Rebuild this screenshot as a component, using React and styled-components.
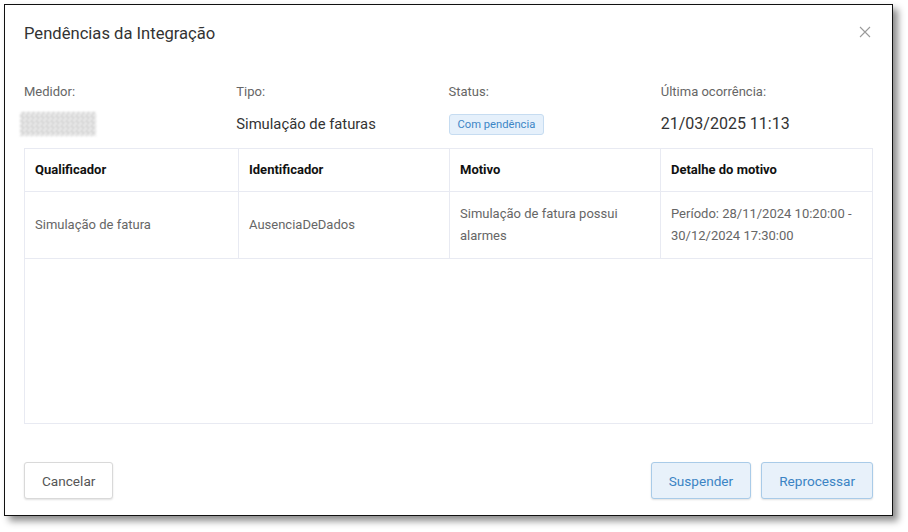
import React from "react";
import styled, { createGlobalStyle } from "styled-components";

const GlobalStyle = createGlobalStyle`
  html, body {
    margin: 0;
    padding: 0;
    background: #ffffff;
    font-family: Roboto, "Liberation Sans", Arial, sans-serif;
  }
`;

const columns = ["Qualificador", "Identificador", "Motivo", "Detalhe do motivo"];

const rows = [
  [
    "Simulação de fatura",
    "AusenciaDeDados",
    "Simulação de fatura possui alarmes",
    "Período: 28/11/2024 10:20:00 - 30/12/2024 17:30:00",
  ],
];

const App = () => {
  return (
    <>
      <GlobalStyle />
      <Page>
        <Dialog>
          <TitleRow>
            <Title>Pendências da Integração</Title>
            <CloseButton aria-label="Fechar">
              <svg width="12" height="12" viewBox="0 0 12 12">
                <path d="M1 1 L11 11 M11 1 L1 11" stroke="#9a9a9a" strokeWidth="1.1" />
              </svg>
            </CloseButton>
          </TitleRow>

          <InfoGrid>
            <Label>Medidor:</Label>
            <Label>Tipo:</Label>
            <Label>Status:</Label>
            <Label>Última ocorrência:</Label>

            <Value>
              {/* medidor ocultado na captura */}
              <Mosaic />
            </Value>
            <Value>Simulação de faturas</Value>
            <Value>
              <Badge>Com pendência</Badge>
            </Value>
            <Value $large>21/03/2025 11:13</Value>
          </InfoGrid>

          <TableWrap>
            <Row $header>
              {columns.map((col) => (
                <HeadCell key={col}>{col}</HeadCell>
              ))}
            </Row>
            {rows.map((row, i) => (
              <Row key={i}>
                {row.map((cell, j) => (
                  <Cell key={j}>{cell}</Cell>
                ))}
              </Row>
            ))}
          </TableWrap>

          <Footer>
            <Button>Cancelar</Button>
            <Actions>
              <Button $primary>Suspender</Button>
              <Button $primary>Reprocessar</Button>
            </Actions>
          </Footer>
        </Dialog>
      </Page>
    </>
  );
};
export default App;

const Page = styled.div`
  width: 908px;
  height: 532px;
  padding: 4px;
  box-sizing: border-box;
`;

const Dialog = styled.div`
  width: 889px;
  height: 512px;
  box-sizing: border-box;
  border: 1px solid #111;
  background: #fff;
  box-shadow: 5px 5px 7px rgba(0, 0, 0, 0.45);
  padding: 17px 19px 16px 19px;
  display: flex;
  flex-direction: column;
`;

const TitleRow = styled.div`
  display: flex;
  justify-content: space-between;
  align-items: center;
  height: 24px;
`;

const Title = styled.h2`
  margin: 0;
  font-size: 16.6px;
  font-weight: 400;
  color: #333;
  line-height: 24px;
`;

const CloseButton = styled.button`
  border: none;
  background: none;
  padding: 0;
  margin: -4px 2px 0 0;
  width: 12px;
  height: 12px;
  display: flex;
  cursor: pointer;
`;

const InfoGrid = styled.div`
  margin-top: 37px;
  display: grid;
  grid-template-columns: repeat(4, 1fr);
  grid-template-rows: 18px 24px;
  row-gap: 11px;
`;

const Label = styled.div`
  font-size: 13px;
  line-height: 18px;
  color: #666;
`;

const Value = styled.div`
  font-size: ${(props) => (props.$large ? "16px" : "14.8px")};
  line-height: 24px;
  color: #333;
  display: flex;
  align-items: center;
`;

const Mosaic = styled.span`
  display: inline-block;
  width: 76px;
  height: 24px;
  margin-left: -4px;
  background-color: #e6e6e6;
  background-image: repeating-conic-gradient(#c9c9c9 0 25%, #f2f2f2 0 50%);
  background-size: 5px 5px;
  filter: blur(0.9px);
  opacity: 0.9;
`;

const Badge = styled.span`
  display: inline-block;
  box-sizing: border-box;
  height: 21px;
  line-height: 19px;
  padding: 0 8px;
  font-size: 11.2px;
  color: #3d86c6;
  background: #e5f0fb;
  border: 1px solid #c6dcf1;
  border-radius: 3px;
`;

const TableWrap = styled.div`
  margin-top: 12px;
  height: 276px;
  box-sizing: border-box;
  border: 1px solid #e8eaf2;
`;

const Row = styled.div`
  display: grid;
  grid-template-columns: 214px 211px 211px 1fr;
  height: ${(props) => (props.$header ? "43px" : "67px")};
  border-bottom: 1px solid #e8eaf2;
  box-sizing: border-box;
`;

const HeadCell = styled.div`
  display: flex;
  align-items: center;
  padding: 0 10px 1px;
  font-size: 13px;
  font-weight: 700;
  color: #111;
  border-right: 1px solid #e8eaf2;
  &:last-child {
    border-right: none;
  }
`;

const Cell = styled.div`
  display: flex;
  align-items: center;
  padding: 0 10px;
  font-size: 13px;
  line-height: 22px;
  color: #666;
  border-right: 1px solid #e8eaf2;
  &:last-child {
    border-right: none;
  }
`;

const Footer = styled.div`
  margin-top: 38px;
  display: flex;
  justify-content: space-between;
  align-items: center;
`;

const Actions = styled.div`
  display: flex;
  gap: 10px;
`;

const Button = styled.button`
  height: 37px;
  box-sizing: border-box;
  padding: 0 17px;
  font-family: Roboto, "Liberation Sans", Arial, sans-serif;
  font-size: 13.6px;
  border-radius: 3px;
  cursor: pointer;
  color: ${(props) => (props.$primary ? "#3c84c4" : "#555")};
  background: ${(props) => (props.$primary ? "#e8f1fa" : "#fff")};
  border: 1px solid ${(props) => (props.$primary ? "#a9cbe8" : "#d9d9d9")};
  box-shadow: 0 1px 2px rgba(0, 0, 0, 0.12);
`;
